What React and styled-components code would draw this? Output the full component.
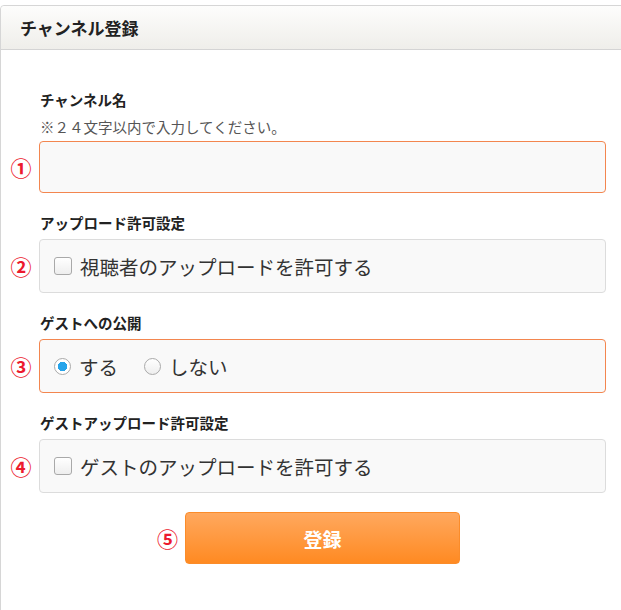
import React from "react";
import styled, { createGlobalStyle } from "styled-components";

const GlobalStyle = createGlobalStyle`
  html, body {
    margin: 0;
    padding: 0;
    background: #fff;
    overflow: hidden;
  }
  body {
    padding-top: 5px;
    font-family: Meiryo, "Noto Sans CJK JP", "Noto Sans", sans-serif;
    color: #333;
  }
`;

const fields = [
  { no: "①", label: "チャンネル名", note: "※２４文字以内で入力してください。", kind: "input", active: true },
  { no: "②", label: "アップロード許可設定", kind: "check", text: "視聴者のアップロードを許可する" },
  { no: "③", label: "ゲストへの公開", kind: "radio", active: true },
  { no: "④", label: "ゲストアップロード許可設定", kind: "check", text: "ゲストのアップロードを許可する" },
];

const App = () => {
  return (
    <>
      <GlobalStyle />
      <Panel>
        <Header>チャンネル登録</Header>
        <Body>
          {fields.map((f) => (
            <Field key={f.no}>
              <span />
              <Label>{f.label}</Label>
              {f.note ? (
                <>
                  <span />
                  <Note>{f.note}</Note>
                </>
              ) : null}
              <Num>{f.no}</Num>
              <Box $active={f.active} $short={f.kind === "input"}>
                {f.kind === "check" && (
                  <Option>
                    <CheckBox />
                    {f.text}
                  </Option>
                )}
                {f.kind === "radio" && (
                  <>
                    <Option>
                      <Radio $on />
                      する
                    </Option>
                    <Option>
                      <Radio />
                      しない
                    </Option>
                  </>
                )}
              </Box>
            </Field>
          ))}
          <Field>
            <span />
            <ButtonRow>
              <ButtonNum>⑤</ButtonNum>
              <Button>登録</Button>
              <span />
            </ButtonRow>
          </Field>
        </Body>
      </Panel>
    </>
  );
};

export default App;

const Panel = styled.div`
  width: 640px;
  min-height: 620px;
  border: 1px solid #d6d6d6;
  border-radius: 4px 4px 0 0;
  box-sizing: border-box;
`;

const Header = styled.div`
  height: 44px;
  box-sizing: border-box;
  padding-left: 19px;
  display: flex;
  align-items: center;
  font-size: 17px;
  font-weight: bold;
  color: #222;
  background: linear-gradient(#fdfdfc, #efeeea);
  border-bottom: 1px solid #d4d4d4;
  border-radius: 4px 4px 0 0;
`;

const Body = styled.div`
  padding: 40px 33px 0 0;
  display: flex;
  flex-direction: column;
  gap: 20px;
`;

const Field = styled.div`
  display: grid;
  grid-template-columns: 38px 1fr;
  align-items: center;
`;

const Label = styled.div`
  font-size: 14.5px;
  font-weight: bold;
  color: #222;
  line-height: 20px;
  padding-left: 1px;
  margin-bottom: 6px;
`;

const Note = styled.div`
  font-size: 14.5px;
  color: #555;
  line-height: 20px;
  padding-left: 1px;
  margin: 1px 0 4px;
`;

const Num = styled.div`
  color: #ec1a2e;
  font-size: 21px;
  font-weight: bold;
  text-align: center;
  padding-left: 2px;
`;

const Box = styled.div`
  height: ${(p) => (p.$short ? "52px" : "54px")};
  box-sizing: border-box;
  border: 1px solid ${(p) => (p.$active ? "#f3864f" : "#dcdcdc")};
  border-radius: 4px;
  background: #f9f9f9;
  display: flex;
  align-items: center;
  padding-left: 14px;
  gap: 26px;
`;

const Option = styled.label`
  display: flex;
  align-items: center;
  gap: 8px;
  font-size: 19.5px;
  color: #333;
`;

const CheckBox = styled.span`
  width: 16px;
  height: 16px;
  border: 1px solid #a9a9a9;
  border-radius: 3px;
  background: linear-gradient(#ffffff, #eeeeee);
  flex: none;
`;

const Radio = styled.span`
  width: 17px;
  height: 17px;
  box-sizing: border-box;
  border: 1px solid #aaaaaa;
  border-radius: 50%;
  background: ${(p) =>
    p.$on
      ? "radial-gradient(circle, #27a4ea 0 4.5px, #fff 5px)"
      : "linear-gradient(#ffffff, #eeeeee)"};
  flex: none;
`;

const ButtonRow = styled.div`
  display: grid;
  grid-template-columns: 1fr 275px 1fr;
  align-items: center;
  margin-top: -1px;
`;

const ButtonNum = styled.div`
  color: #ec1a2e;
  font-size: 21px;
  font-weight: bold;
  justify-self: end;
  margin-right: 7px;
`;

const Button = styled.button`
  height: 52px;
  border: 1px solid #fb8c2a;
  border-radius: 4px;
  background: linear-gradient(#ffa85e, #ff8a22);
  color: #fff;
  font-family: inherit;
  font-size: 19px;
  font-weight: bold;
  cursor: pointer;
`;
